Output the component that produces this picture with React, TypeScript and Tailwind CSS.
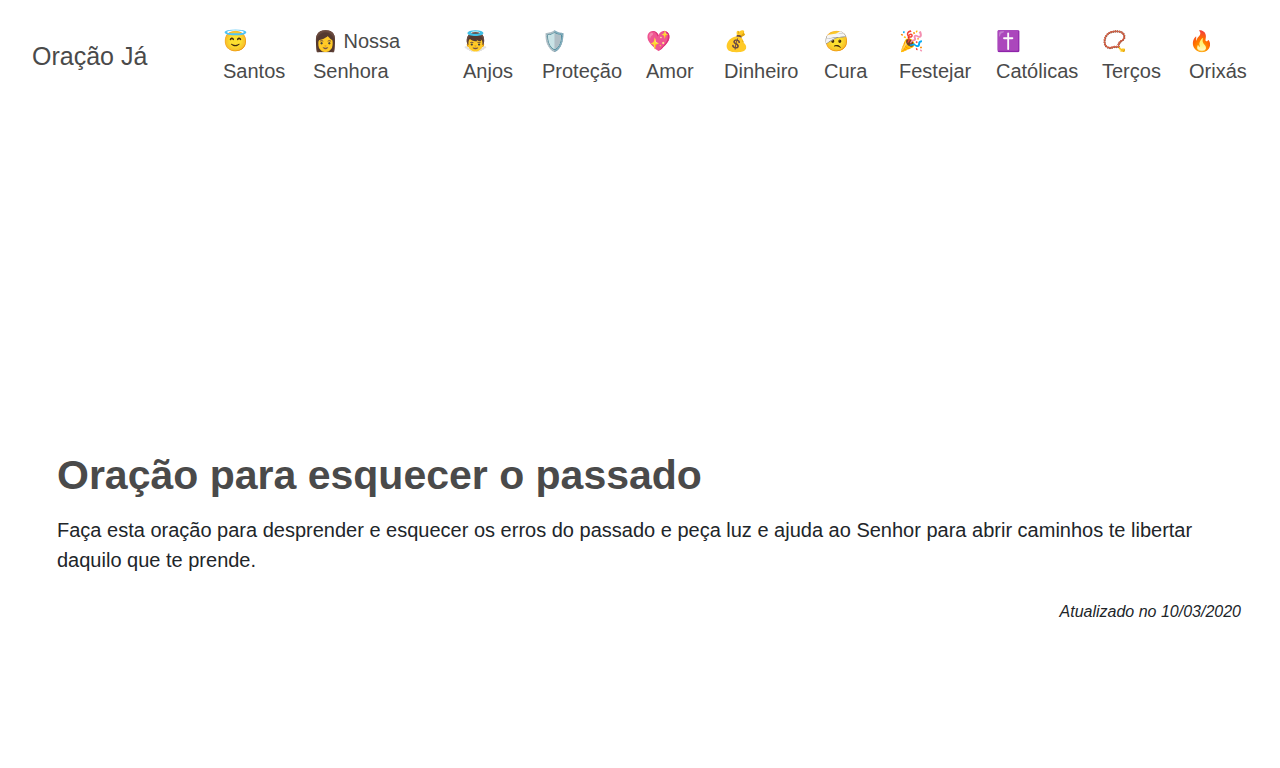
const links = [
  { emoji: "😇", label: "Santos", width: "w-[90px]" },
  { emoji: "👩", label: "Nossa Senhora", width: "w-[150px]" },
  { emoji: "👼", label: "Anjos", width: "w-[79px]" },
  { emoji: "🛡️", label: "Proteção", width: "w-[104px]" },
  { emoji: "💖", label: "Amor", width: "w-[78px]" },
  { emoji: "💰", label: "Dinheiro", width: "w-[100px]" },
  { emoji: "🤕", label: "Cura", width: "w-[75px]" },
  { emoji: "🎉", label: "Festejar", width: "w-[97px]" },
  { emoji: "✝️", label: "Católicas", width: "w-[106px]" },
  { emoji: "📿", label: "Terços", width: "w-[87px]" },
  { emoji: "🔥", label: "Orixás", width: "w-[83px]" },
];

export default function App() {
  return (
    <div className="min-h-screen bg-white font-['Liberation_Sans',Arial,sans-serif] text-[#212529]">
      <header className="flex items-center justify-between pt-[26px] pl-8 pr-2 text-[#4a4a4a]">
        <a href="#" className="text-[25px] leading-[38px] whitespace-nowrap">
          Oração Já
        </a>
        <nav aria-label="Principal">
          <ul className="flex text-[20px] leading-[30px]">
            {links.map((link) => (
              <li key={link.label} className={`${link.width} shrink-0`}>
                <a href="#" className="block w-min">
                  {link.label === "Nossa Senhora" ? (
                    <>
                      <span className="whitespace-nowrap">{link.emoji} Nossa</span> Senhora
                    </>
                  ) : (
                    <>
                      {link.emoji} {link.label}
                    </>
                  )}
                </a>
              </li>
            ))}
          </ul>
        </nav>
      </header>
      <main className="pt-[364px] pr-[39px] pl-[57px]">
        <h1 className="text-[41px] leading-[50px] font-bold text-[#4a4a4a]">
          Oração para esquecer o passado
        </h1>
        <p className="mt-[15px] text-[20px] leading-[30px]">
          Faça esta oração para desprender e esquecer os erros do passado e peça luz e ajuda ao Senhor para abrir
          caminhos te libertar daquilo que te prende.
        </p>
        <p className="mt-[25px] text-right text-[16px] leading-[24px] italic">
          Atualizado no 10/03/2020
        </p>
      </main>
    </div>
  );
}
